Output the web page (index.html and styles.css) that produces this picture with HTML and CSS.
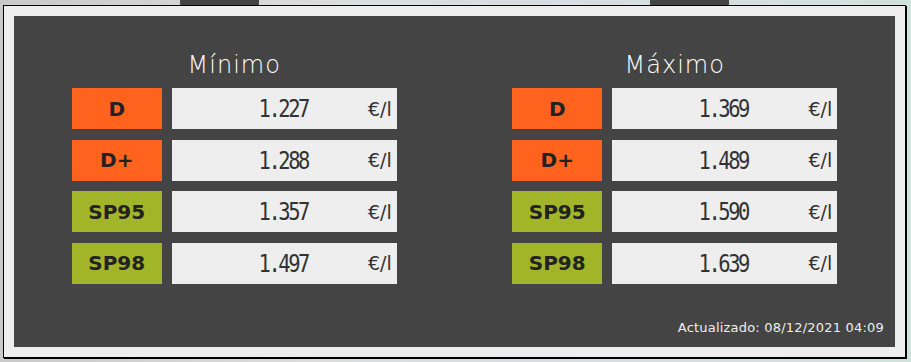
FILE: index.html
```html
<!DOCTYPE html>
<html>
<head>
<meta charset="utf-8" />
<link rel="stylesheet" href="styles.css">
</head>
<body>
<div class="tabs">
  <span class="tab"></span>
  <span class="tab"></span>
</div>
<div class="marco">
  <div class="panel">
    <div class="columnas">
      <div class="col">
        <h2>Mínimo</h2>
        <div class="fila">
          <span class="comb diesel">D</span>
          <span class="precio"><span class="num">1.227</span><span class="unidad">€/l</span></span>
        </div>
        <div class="fila">
          <span class="comb diesel">D+</span>
          <span class="precio"><span class="num">1.288</span><span class="unidad">€/l</span></span>
        </div>
        <div class="fila">
          <span class="comb gasolina">SP95</span>
          <span class="precio"><span class="num">1.357</span><span class="unidad">€/l</span></span>
        </div>
        <div class="fila">
          <span class="comb gasolina">SP98</span>
          <span class="precio"><span class="num">1.497</span><span class="unidad">€/l</span></span>
        </div>
      </div>
      <div class="col">
        <h2>Máximo</h2>
        <div class="fila">
          <span class="comb diesel">D</span>
          <span class="precio"><span class="num">1.369</span><span class="unidad">€/l</span></span>
        </div>
        <div class="fila">
          <span class="comb diesel">D+</span>
          <span class="precio"><span class="num">1.489</span><span class="unidad">€/l</span></span>
        </div>
        <div class="fila">
          <span class="comb gasolina">SP95</span>
          <span class="precio"><span class="num">1.590</span><span class="unidad">€/l</span></span>
        </div>
        <div class="fila">
          <span class="comb gasolina">SP98</span>
          <span class="precio"><span class="num">1.639</span><span class="unidad">€/l</span></span>
        </div>
      </div>
    </div>
    <p class="actualizado">Actualizado: 08/12/2021 04:09</p>
  </div>
</div>
</body>
</html>
```

FILE: styles.css
```css
body {
  margin: 0;
  height: 362px;
  overflow: hidden;
  background: linear-gradient(90deg, #c9c9c9 0%, #dcdcdc 35%, #d8dde2 60%, #d0e2dc 100%);
  font-family: "DejaVu Sans", sans-serif;
}
.tabs {
  display: flex;
  height: 5px;
  padding-left: 180px;
  gap: 391px;
}
.tab {
  width: 79px;
  height: 5px;
  background: #444;
}
.marco {
  width: 881px;
  margin-left: 3px;
  padding: 10px;
  background: #eeeeee;
  border: 1px solid #000;
  box-shadow: 1px 1px 0 #000;
}
.panel {
  height: 331px;
  background: #444444;
  display: flex;
  flex-direction: column;
  box-sizing: border-box;
  padding-top: 35px;
}
.columnas {
  display: flex;
  flex: 1;
}
.col {
  flex: 1;
  display: flex;
  flex-direction: column;
  align-items: center;
}
h2 {
  margin: 0 0 9px 0;
  font-family: "DejaVu Sans", sans-serif;
  font-weight: 300;
  font-size: 24px;
  line-height: 28px;
  letter-spacing: 1px;
  color: #fff;
}
.fila {
  display: flex;
  gap: 10px;
  height: 41px;
  margin-bottom: 10.67px;
}
.comb {
  width: 90px;
  display: flex;
  align-items: center;
  justify-content: center;
  font-family: "DejaVu Sans", sans-serif;
  font-weight: 700;
  font-size: 20px;
  color: #222;
}
.diesel {
  background: #ff631e;
}
.gasolina {
  background: #a2b529;
}
.precio {
  width: 225px;
  display: flex;
  align-items: center;
  background: #eeeeee;
  color: #333;
  padding-right: 5px;
  box-sizing: border-box;
}
.num {
  flex: 1;
  text-align: right;
  font-family: "DejaVu Sans Mono", monospace;
  font-weight: 200;
  font-size: 25px;
  letter-spacing: -3px;
  transform: scaleX(0.82);
  transform-origin: right center;
}
.unidad {
  width: 84px;
  text-align: right;
  font-size: 19px;
}
.actualizado {
  margin: 0;
  padding: 0 11px 12px 0;
  text-align: right;
  font-size: 13px;
  line-height: 15px;
  letter-spacing: 0.2px;
  color: #eee;
}
```
